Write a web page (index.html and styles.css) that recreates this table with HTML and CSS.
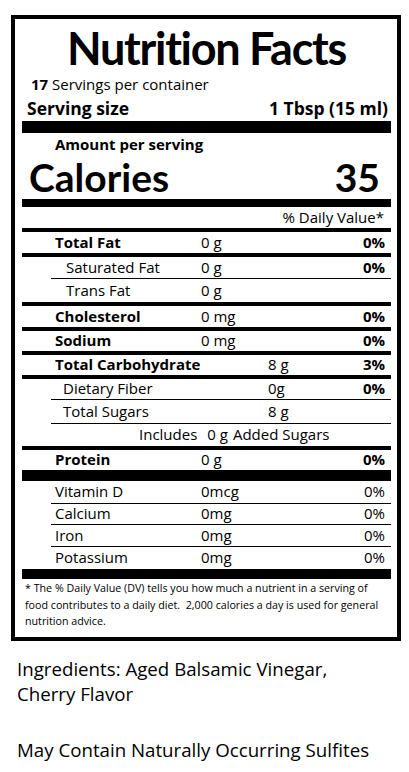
FILE: index.html
```html
<!DOCTYPE html>
<html>
  <head>
    <title>Nutrition Facts</title>
    <link rel="stylesheet" href="styles.css">
  </head>
  <body>
    <div class="label">
      <h1 class="title">Nutrition Facts</h1>
      <div class="servings"><b>17</b> Servings per container</div>
      <div class="serving-size">
        <span>Serving size</span>
        <span>1 Tbsp (15 ml)</span>
      </div>

      <div class="calories-block">
        <div class="amount">Amount per serving</div>
        <div class="calories">
          <span>Calories</span>
          <span>35</span>
        </div>
      </div>

      <div class="dv-head">% Daily Value*</div>

      <div class="row h21">
        <span class="name bold">Total Fat</span>
        <span class="qty">0 g</span>
        <span class="dv">0%</span>
      </div>
      <div class="row h21">
        <span class="name indent">Saturated Fat</span>
        <span class="qty">0 g</span>
        <span class="dv">0%</span>
      </div>
      <div class="row sub h23">
        <span class="name indent">Trans Fat</span>
        <span class="qty">0 g</span>
      </div>
      <div class="row h21">
        <span class="name bold">Cholesterol</span>
        <span class="qty">0 mg</span>
        <span class="dv">0%</span>
      </div>
      <div class="row h20">
        <span class="name bold">Sodium</span>
        <span class="qty">0 mg</span>
        <span class="dv">0%</span>
      </div>
      <div class="row carb h20">
        <span class="name bold">Total Carbohydrate</span>
        <span class="qty">8 g</span>
        <span class="dv">3%</span>
      </div>
      <div class="row carb h20">
        <span class="name indent-sm">Dietary Fiber</span>
        <span class="qty">0g</span>
        <span class="dv">0%</span>
      </div>
      <div class="row carb sub h23">
        <span class="name indent-sm">Total Sugars</span>
        <span class="qty">8 g</span>
      </div>
      <div class="row sub includes h22">
        <span>Includes</span>
        <span class="inc-qty">0 g</span>
        <span>Added Sugars</span>
      </div>
      <div class="row h20">
        <span class="name bold">Protein</span>
        <span class="qty">0 g</span>
        <span class="dv">0%</span>
      </div>

      <div class="row vitamin first h22">
        <span class="name">Vitamin D</span>
        <span class="qty">0mcg</span>
        <span class="dv">0%</span>
      </div>
      <div class="row vitamin sub h20">
        <span class="name">Calcium</span>
        <span class="qty">0mg</span>
        <span class="dv">0%</span>
      </div>
      <div class="row vitamin sub h21">
        <span class="name">Iron</span>
        <span class="qty">0mg</span>
        <span class="dv">0%</span>
      </div>
      <div class="row vitamin sub h22">
        <span class="name">Potassium</span>
        <span class="qty">0mg</span>
        <span class="dv">0%</span>
      </div>

      <p class="footnote">
        * The % Daily Value (DV) tells you how much a nutrient in a serving of<br>
        food contributes to a daily diet.&nbsp; 2,000 calories a day is used for general<br>
        nutrition advice.
      </p>
    </div>

    <div class="ingredients">
      <p>Ingredients: Aged Balsamic Vinegar,<br>Cherry Flavor</p>
      <p class="sulfites">May Contain Naturally Occurring Sulfites</p>
    </div>
  </body>
</html>
```

FILE: styles.css
```css
* {
  box-sizing: border-box;
  margin: 0;
  padding: 0;
}

body {
  background: #fff;
  color: #000;
  font-family: "Open Sans", "Liberation Sans", sans-serif;
}

.label {
  margin: 15px 0 0 11px;
  width: 390px;
  border: 4px solid #000;
  padding: 0 6px 0 7px;
}

.title {
  height: 54px;
  line-height: 58px;
  font-family: Lato, "Open Sans", sans-serif;
  font-size: 45px;
  font-weight: bold;
  letter-spacing: -1.3px;
  font-variant-ligatures: none;
  text-align: center;
}

.servings {
  height: 22px;
  line-height: 22px;
  padding-left: 9px;
  font-size: 15px;
}

.serving-size {
  display: flex;
  justify-content: space-between;
  height: 26px;
  line-height: 27px;
  padding: 0 3px 0 5px;
  font-size: 17.5px;
  font-weight: bold;
}

.calories-block {
  border-top: 12px solid #000;
}

.amount {
  height: 22px;
  line-height: 22px;
  padding-left: 33px;
  font-size: 15px;
  font-weight: bold;
}

.calories {
  display: flex;
  justify-content: space-between;
  height: 44px;
  line-height: 44px;
  padding: 0 11px 0 7px;
  font-family: Lato, "Open Sans", sans-serif;
  font-size: 39px;
  font-weight: bold;
}

.dv-head {
  border-top: 8px solid #000;
  height: 29px;
  line-height: 21px;
  padding-right: 7px;
  text-align: right;
  font-size: 15px;
}

.row {
  display: flex;
  align-items: center;
  border-top: 4px solid #000;
  padding: 0 6px 2px 33px;
  font-size: 15px;
}

/* content heights, measured per row */
.row.h20 { height: 24px; }
.row.h21 { height: 25px; }
.row.h22 { height: 26px; }
.row.sub.h20 { height: 21px; }
.row.sub.h21 { height: 22px; }
.row.sub.h22 { height: 23px; }
.row.sub.h23 { height: 24px; }

.row .name {
  width: 146px;
}

.row.carb .name {
  width: 213px;
}

.row .qty {
  flex: 1;
}

.row .dv {
  font-weight: bold;
}

.row.vitamin .dv {
  font-weight: normal;
}

.bold {
  font-weight: bold;
}

.indent {
  padding-left: 11px;
}

.indent-sm {
  padding-left: 8px;
}

/* thin dividers start under the nutrient names */
.row.sub {
  border-top-width: 1px;
  margin-left: 29px;
  padding-left: 4px;
}

.row.includes {
  padding-left: 88px;
}

.row.includes .inc-qty {
  margin: 0 5px 0 10px;
}

.row.vitamin.first {
  height: 33px;
  border-top-width: 11px;
}

.footnote {
  border-top: 10px solid #000;
  padding: 1px 0 7px 3px;
  font-size: 10.7px;
  line-height: 16.5px;
}

.ingredients {
  padding: 15px 0 0 17px;
  font-size: 18.7px;
  line-height: 25px;
}

.ingredients .sulfites {
  margin-top: 31px;
}
```
